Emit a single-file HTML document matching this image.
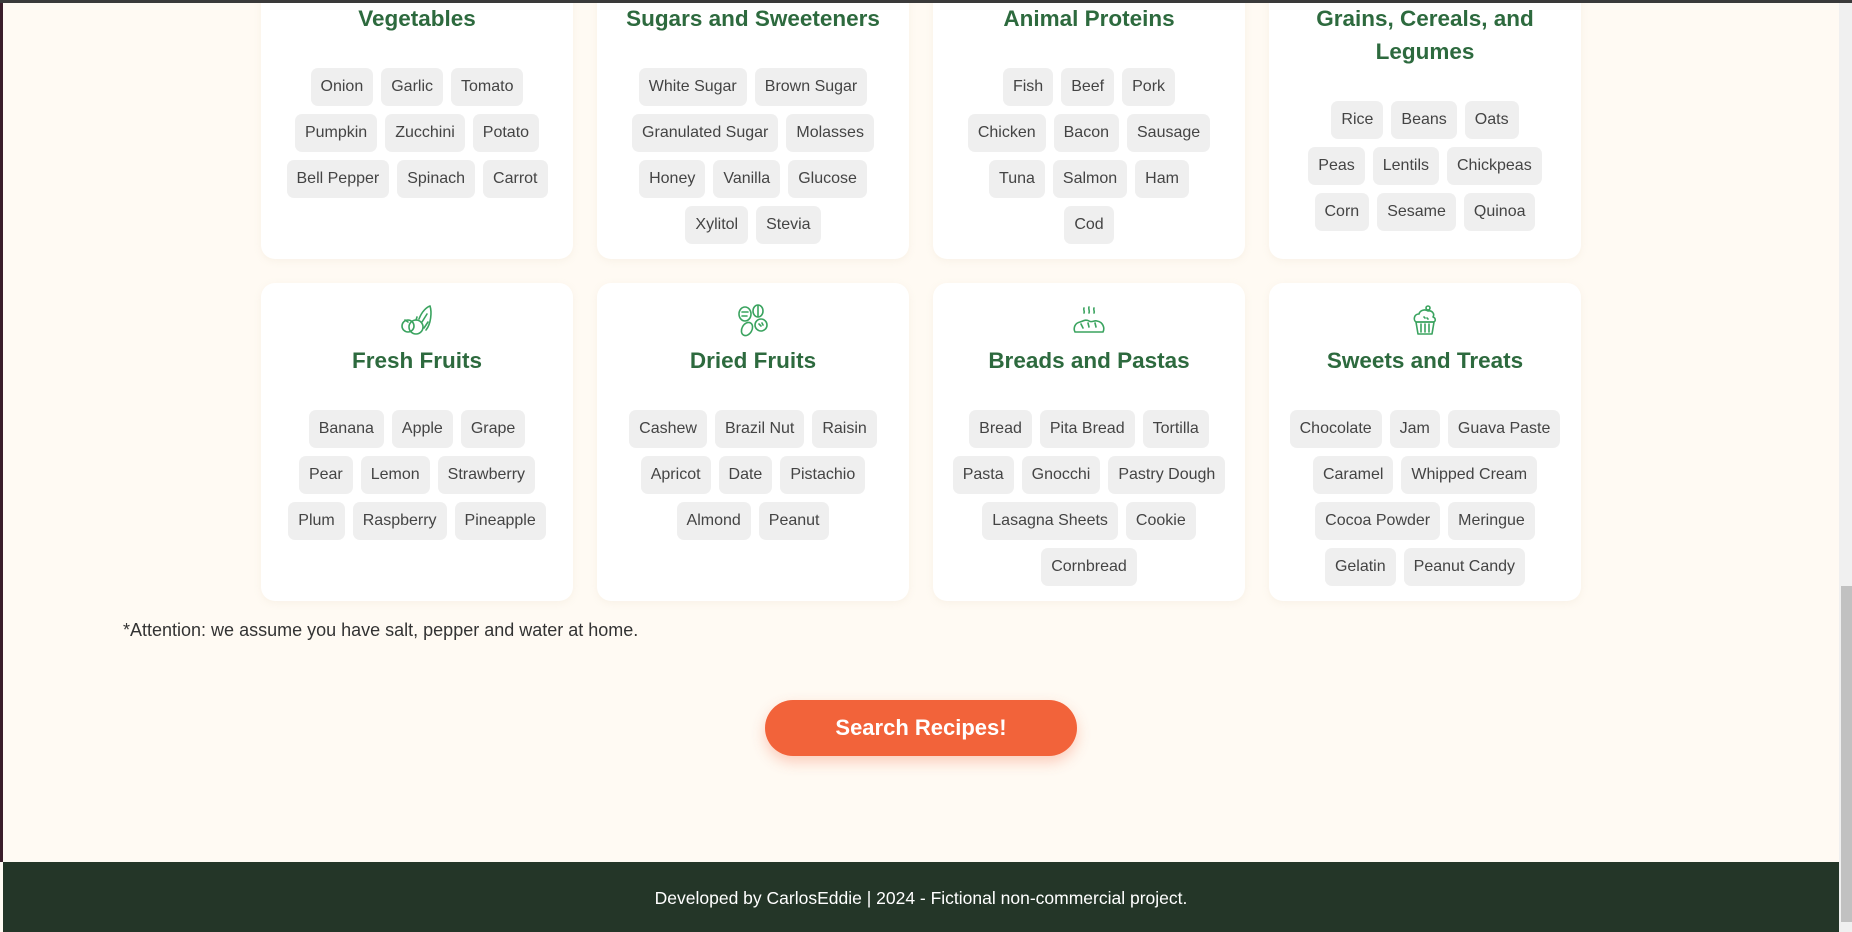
<!DOCTYPE html>
<html><head><meta charset="utf-8"><style>
*{box-sizing:border-box;margin:0;padding:0}
html,body{width:1852px;height:932px;overflow:hidden}
body{background:#fffaf3;font-family:"Liberation Sans",sans-serif;position:relative}
.topbar{position:absolute;left:0;top:0;width:1852px;height:3px;background:#3a3a3a;z-index:5}
.leftbar{position:absolute;left:0;top:0;width:3px;height:862px;background:#3b1e2a}
.sb{position:absolute;left:1839px;top:0;width:13px;height:932px;background:#f0f0f0}
.thumb{position:absolute;left:1841px;top:586px;width:11px;height:336px;background:#c1c1c1}
.card{position:absolute;width:312px;height:318px;background:#fff;border-radius:14px;box-shadow:0 2px 8px rgba(200,180,150,.12);text-align:center}
.icon{position:absolute;left:138px;top:19px;width:36px;height:36px}
.title{position:absolute;left:0;right:0;top:61px;font-size:22.5px;font-weight:bold;color:#2d6a3e;line-height:33px}
.tags{position:absolute;left:0;right:0;top:127px}
.row{display:flex;justify-content:center;gap:8px;margin-bottom:8px}
.tag{height:38px;line-height:38px;padding:0 10px;background:#efefef;border-radius:7px;font-size:16px;color:#444}
.att{position:absolute;left:123px;top:620px;font-size:18px;color:#333}
.btn{position:absolute;left:765px;top:700px;width:312px;height:56px;border-radius:28px;background:#f2633a;color:#fff;font-size:22px;font-weight:bold;text-align:center;line-height:56px;box-shadow:0 6px 14px rgba(242,99,58,.3)}
.foot{position:absolute;left:3px;top:862px;width:1836px;height:70px;background:#243628;color:#fff;font-size:17.5px;text-align:center;line-height:72px}
svg{stroke:#3aa35f;fill:none;stroke-width:1.6;stroke-linecap:round;stroke-linejoin:round}
</style></head><body>
<div class="topbar"></div><div class="leftbar"></div>

<div class="card" style="left:261px;top:-59px"><div class="title">Vegetables</div><div class="tags">
<div class="row"><span class="tag">Onion</span><span class="tag">Garlic</span><span class="tag">Tomato</span></div>
<div class="row"><span class="tag">Pumpkin</span><span class="tag">Zucchini</span><span class="tag">Potato</span></div>
<div class="row"><span class="tag">Bell Pepper</span><span class="tag">Spinach</span><span class="tag">Carrot</span></div></div></div>

<div class="card" style="left:597px;top:-59px"><div class="title">Sugars and Sweeteners</div><div class="tags">
<div class="row"><span class="tag">White Sugar</span><span class="tag">Brown Sugar</span></div>
<div class="row"><span class="tag">Granulated Sugar</span><span class="tag">Molasses</span></div>
<div class="row"><span class="tag">Honey</span><span class="tag">Vanilla</span><span class="tag">Glucose</span></div>
<div class="row"><span class="tag">Xylitol</span><span class="tag">Stevia</span></div></div></div>

<div class="card" style="left:933px;top:-59px"><div class="title">Animal Proteins</div><div class="tags">
<div class="row"><span class="tag">Fish</span><span class="tag">Beef</span><span class="tag">Pork</span></div>
<div class="row"><span class="tag">Chicken</span><span class="tag">Bacon</span><span class="tag">Sausage</span></div>
<div class="row"><span class="tag">Tuna</span><span class="tag">Salmon</span><span class="tag">Ham</span></div>
<div class="row"><span class="tag">Cod</span></div></div></div>

<div class="card" style="left:1269px;top:-59px"><div class="title">Grains, Cereals, and<br>Legumes</div><div class="tags" style="top:160px">
<div class="row"><span class="tag">Rice</span><span class="tag">Beans</span><span class="tag">Oats</span></div>
<div class="row"><span class="tag">Peas</span><span class="tag">Lentils</span><span class="tag">Chickpeas</span></div>
<div class="row"><span class="tag">Corn</span><span class="tag">Sesame</span><span class="tag">Quinoa</span></div></div></div>

<div class="card" style="left:261px;top:283px">
<svg class="icon" viewBox="0 0 36 36"><circle cx="9" cy="24" r="6"/><circle cx="17" cy="25" r="7"/><path d="M17 18l1-3M20 17c3-8 8-12 11-13 2 6 1 18-4 24"/><path d="M23 20l5-8M25 26l4-6"/><path d="M6 18l3 2"/></svg>
<div class="title">Fresh Fruits</div><div class="tags">
<div class="row"><span class="tag">Banana</span><span class="tag">Apple</span><span class="tag">Grape</span></div>
<div class="row"><span class="tag">Pear</span><span class="tag">Lemon</span><span class="tag">Strawberry</span></div>
<div class="row"><span class="tag">Plum</span><span class="tag">Raspberry</span><span class="tag">Pineapple</span></div></div></div>

<div class="card" style="left:597px;top:283px">
<svg class="icon" viewBox="0 0 36 36"><ellipse cx="10" cy="12" rx="6" ry="7"/><path d="M7 10h6M7 14h5"/><ellipse cx="23" cy="9" rx="5" ry="6"/><path d="M23 4v10"/><ellipse cx="12" cy="27" rx="5" ry="7" transform="rotate(30 12 27)"/><circle cx="26" cy="23" r="6"/><path d="M24 22l2 2M27 21l1 2"/></svg>
<div class="title">Dried Fruits</div><div class="tags">
<div class="row"><span class="tag">Cashew</span><span class="tag">Brazil Nut</span><span class="tag">Raisin</span></div>
<div class="row"><span class="tag">Apricot</span><span class="tag">Date</span><span class="tag">Pistachio</span></div>
<div class="row"><span class="tag">Almond</span><span class="tag">Peanut</span></div></div></div>

<div class="card" style="left:933px;top:283px">
<svg class="icon" viewBox="0 0 36 36"><path d="M4 30h28c2-4 0-10-6-11-3-1-5 2-8 0-3-2-6 0-9 1-5 1-7 6-5 10z"/><path d="M10 22l2 4M17 21l1 4M24 21l1 4"/><path d="M13 6c-1 2 1 3 0 5M18 5c-1 2 1 3 0 6M23 6c-1 2 1 3 0 5"/></svg>
<div class="title">Breads and Pastas</div><div class="tags">
<div class="row"><span class="tag">Bread</span><span class="tag">Pita Bread</span><span class="tag">Tortilla</span></div>
<div class="row"><span class="tag">Pasta</span><span class="tag">Gnocchi</span><span class="tag">Pastry Dough</span></div>
<div class="row"><span class="tag">Lasagna Sheets</span><span class="tag">Cookie</span></div>
<div class="row"><span class="tag">Cornbread</span></div></div></div>

<div class="card" style="left:1269px;top:283px">
<svg class="icon" viewBox="0 0 36 36"><path d="M9 20c-3-2-2-8 3-8 1-4 6-5 9-3 4-1 7 3 5 6 3 1 3 5 0 5z"/><path d="M9 20h18l-2 12H11z"/><path d="M14 22v8M18 22v8M22 22v8"/><circle cx="21" cy="6" r="2"/><path d="M17 15l1 1M20 16l1 1"/></svg>
<div class="title">Sweets and Treats</div><div class="tags">
<div class="row"><span class="tag">Chocolate</span><span class="tag">Jam</span><span class="tag">Guava Paste</span></div>
<div class="row"><span class="tag">Caramel</span><span class="tag">Whipped Cream</span></div>
<div class="row"><span class="tag">Cocoa Powder</span><span class="tag">Meringue</span></div>
<div class="row"><span class="tag">Gelatin</span><span class="tag">Peanut Candy</span></div></div></div>

<div class="att">*Attention: we assume you have salt, pepper and water at home.</div>
<div class="btn">Search Recipes!</div>
<div class="foot">Developed by CarlosEddie | 2024 - Fictional non-commercial project.</div>
<div class="sb"></div><div class="thumb"></div>
</body></html>
